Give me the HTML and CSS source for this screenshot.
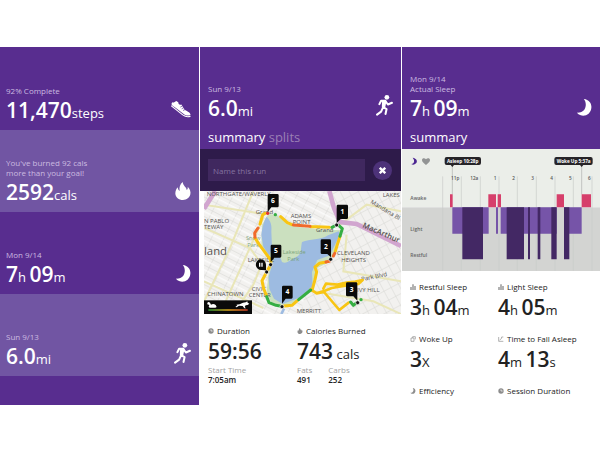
FILE: index.html
```
<!DOCTYPE html>
<html lang="en">

<head>
  <meta charset="utf-8" />
  <title>Health</title>
  <link rel="stylesheet" href="styles.css">
</head>

<body>
  <!-- shared icons -->
  <svg class="defs" aria-hidden="true">
    <symbol id="runner" viewBox="0 0 50 62">
      <circle cx="32" cy="7" r="7" />
      <path d="M10 27 L15 17 L27 17 L21 36 L31 42 L28 56 M27 17 L35 28 L47 23 M20 38 L15 49 L3 58" fill="none" stroke="currentColor" stroke-width="6" stroke-linejoin="round" stroke-linecap="round" />
      <path d="M18 15 L31 17 L27 37 L17 36z" />
    </symbol>
    <symbol id="moon" viewBox="0 0 44 50">
      <path d="M20 0 C36 2 44 14 42 27 C40 43 26 52 11 48 C6 47 2 44 0 40 C13 41 23 34 25 23 C27 14 25 6 20 0z" />
    </symbol>
    <symbol id="bars" viewBox="0 0 18 18">
      <path d="M1 9h4v9H1z M7 1h4v17H7z M13 6h4v12h-4z" />
    </symbol>
    <symbol id="clock" viewBox="0 0 18 18">
      <circle cx="9" cy="9" r="8" />
      <path d="M9 4v5h5" fill="none" stroke="#fff" stroke-width="2" />
    </symbol>
    <symbol id="flame" viewBox="0 0 46 54">
      <path d="M22 0 C23 12 34 15 34 24 C37 22 38 18 37 14 C44 21 47 29 45 37 C43 47 34 54 23 54 C10 54 1 46 0 35 C0 27 3 21 7 16 C8 22 9 25 13 27 C11 16 14 7 22 0z" />
    </symbol>
  </svg>

  <main class="screens">
    <section class="screen tiles">
      <div class="tile">
        <div>
          <p class="note">92% Complete</p>
          <p class="figure">11,470<small>steps</small></p>
        </div>
        <svg class="icon shoe" viewBox="0 0 58 50">
          <path d="M3 4 C7 6 11 3 15 0 L21 4 C21 10 25 12 30 10 L39 24 C43 30 57 31 57 41 C50 44 43 43 37 38 L13 20 C7 16 2 14 1 9z" />
          <path d="M0 14 L34 41 C42 47 49 48 57 45" fill="none" stroke="#fff" stroke-width="3" />
          <path d="M27 18l7-4M31 23l7-4M35 28l6-3" stroke="#582d8f" stroke-width="2" />
        </svg>
      </div>
      <div class="tile light">
        <div>
          <p class="note">You've burned 92 cals<br>more than your goal!</p>
          <p class="figure">2592<small>cals</small></p>
        </div>
        <svg class="icon flame"><use href="#flame" /></svg>
      </div>
      <div class="tile">
        <div>
          <p class="note">Mon 9/14</p>
          <p class="figure">7<small>h</small> 09<small>m</small></p>
        </div>
        <svg class="icon moon"><use href="#moon" /></svg>
      </div>
      <div class="tile light">
        <div>
          <p class="note">Sun 9/13</p>
          <p class="figure">6.0<small>mi</small></p>
        </div>
        <svg class="icon runner"><use href="#runner" /></svg>
      </div>
    </section>

    <section class="screen">
      <header class="head">
        <div class="headline">
          <div>
            <p class="note">Sun 9/13</p>
            <p class="figure">6.0<small>mi</small></p>
          </div>
          <svg class="icon runner"><use href="#runner" /></svg>
        </div>
        <nav class="tabs"><a href="#summary">summary</a> <a href="#splits" class="off">splits</a></nav>
      </header>
      <form class="rename">
        <input type="text" placeholder="Name this run" aria-label="Name this run">
        <button type="button" aria-label="Cancel">
          <svg viewBox="0 0 18 18"><path d="M2 2l14 14M16 2L2 16" stroke="#fff" stroke-width="6" /></svg>
        </button>
      </form>
      <svg class="map" viewBox="12 19 591 369">
        <defs>
          <pattern id="streets" width="34" height="26" patternUnits="userSpaceOnUse" patternTransform="rotate(27)">
            <path d="M0 1H34M1 0V26" stroke="#dadad6" stroke-width="2" />
            <path d="M0 14H34" stroke="#fff" stroke-width="3" />
          </pattern>
          <pattern id="streets2" width="24" height="30" patternUnits="userSpaceOnUse" patternTransform="rotate(-28)">
            <path d="M0 1H24M1 0V30" stroke="#d8d8d4" stroke-width="2" />
          </pattern>
          <linearGradient id="pace">
            <stop offset="0" stop-color="#2fae3c" />
            <stop offset=".5" stop-color="#f5b81c" />
            <stop offset="1" stop-color="#e8442c" />
          </linearGradient>
        </defs>
        <rect x="12" y="19" width="591" height="369" fill="#f2f1ef" />
        <rect x="12" y="19" width="591" height="369" fill="url(#streets)" />
        <path d="M395 19H603V388H300L340 240L420 150z" fill="#f2f1ef" />
        <path d="M395 19H603V388H300L340 240L420 150z" fill="url(#streets2)" />
        <!-- main roads -->
        <g fill="none" stroke="#e9e6b8" stroke-width="6">
          <path d="M12 350L90 190L160 19M60 388L190 100M12 130L150 190L200 260M12 60L190 88M100 388L160 300L185 240M12 290L190 370" />
          <path d="M420 120L500 60L603 80M440 150L430 260L603 290M340 320L520 350L603 388" />
        </g>
        <path d="M12 72L46 19M388 19L402 70L420 112L470 118L603 184" fill="none" stroke="#d1a5cf" stroke-width="14" />
        <!-- park and lake -->
        <path d="M205 88L230 90L262 118L300 128L385 136L424 136L418 172L392 230L352 250L336 308L296 350L246 368L214 356L200 320L206 260L212 226L184 180L186 120z" fill="#cbe0bf" />
        <path d="M200 96C212 108 216 122 214 140L216 190L208 214L190 186L184 150C188 124 192 108 200 96z" fill="#9dbbe1" />
        <path d="M220 226C232 206 240 212 246 232C262 240 272 222 290 216C306 210 302 186 306 172C330 162 360 168 384 152L416 140L420 150L400 190L390 212L352 226L336 262L338 306L296 340L248 358L222 342L208 312L206 276z" fill="#9dbbe1" />
        <path d="M244 388L252 372" fill="none" stroke="#9dbbe1" stroke-width="8" />
        <g class="places">
          <text x="20" y="33">NORTHGATE/WAVERLY</text>
          <text x="12" y="114">N PABLO</text>
          <text x="12" y="133">TEWAY</text>
          <text x="272" y="99">ADAMS</text>
          <text x="278" y="117">POINT</text>
          <text x="143" y="233">LAKESIDE</text>
          <text x="155" y="319">CIVIC</text>
          <text x="146" y="338">CENTER</text>
          <text x="22" y="334">CHINATOWN</text>
          <text x="411" y="211">CLEVELAND</text>
          <text x="424" y="231">HEIGHTS</text>
          <text x="471" y="322">IVY HILL</text>
          <text x="548" y="38">LAKES</text>
          <text x="290" y="384">MERRITT</text>
        </g>
        <g class="parks">
          <text x="138" y="165">Snow</text>
          <text x="142" y="187">Park</text>
          <text x="248" y="209">Lakeside</text>
          <text x="262" y="229">Park</text>
        </g>
        <g class="roads">
          <text x="167" y="87">Grand</text>
          <text x="348" y="142">Grand</text>
          <text x="485" y="290" transform="rotate(-12 485 290)">Park Blvd</text>
          <text x="510" y="55" transform="rotate(31 510 55)">Mandana Bl</text>
          <text class="artery" x="486" y="128" transform="rotate(23 486 128)">MacArthur</text>
        </g>
        <text class="city" x="12" y="210">land</text>
        <!-- run, coloured by pace -->
        <g fill="none" stroke-width="9" stroke-linejoin="round" stroke-linecap="round">
          <g stroke="#f8c513">
            <path d="M196 86L188 91L180 118M165 160L178 180L212 226L212 240L200 262L186 288L191 312L200 334M246 365L276 362L292 348M336 318L345 285L350 262L345 247L358 236L378 232M406 200L412 180L420 155M388 128L350 126L332 126M276 120L262 114L242 96" />
            <path d="M332 314L350 326L372 322L418 376L446 354M350 326L375 318L395 310L440 302L475 298L488 286L466 291L440 294L412 300L378 297L370 312" stroke-width="8" />
          </g>
          <path d="M174 130L164 145L165 158M378 232L388 230M400 214L404 206M330 125L280 121" stroke="#f06a2c" />
          <path d="M200 336L207 354L228 362L240 364M296 345L332 316M420 155L427 132L416 122M404 124L396 128M452 352L460 362L470 354" stroke="#35ae43" />
        </g>
        <circle cx="226" cy="90" r="5" fill="#35ae43" />
        <circle cx="203" cy="86" r="5" fill="#e0322e" />
        <circle cx="483" cy="345" r="5" fill="#35ae43" />
        <g fill="#111" stroke="#fff" stroke-width="2">
          <circle cx="410" cy="121" r="6" />
          <circle cx="392" cy="224" r="6" />
          <circle cx="473" cy="354" r="6" />
          <circle cx="246" cy="366" r="6" />
          <circle cx="212" cy="240" r="6" />
          <circle cx="200" cy="262" r="6" />
        </g>
        <g fill="#0a0a0a">
          <path d="M207 28h25q4 0 4 4v32q0 4-4 4h-18l-11 14v-50q0-4 4-4z" />
          <path d="M216 180h24q4 0 4 4v31q0 4-4 4h-17l-11 14v-49q0-4 4-4z" />
          <path d="M250 303h24q4 0 4 4v31q0 4-4 4h-17l-11 15v-50q0-4 4-4z" />
          <path d="M414 60h26q4 0 4 4v35q0 4-4 4h-18l-12 12v-51q0-4 4-4z" />
          <path d="M366 164h23q4 0 4 4v50l-11-10h-16q-4 0-4-4v-36q0-4 4-4z" />
          <path d="M442 293h26q4 0 4 4v51l-12-13h-18q-4 0-4-4v-34q0-4 4-4z" />
          <path d="M182 224a16 16 0 0 1 16 16v17l-13-1a16 16 0 1 1-3-32z" />
        </g>
        <g class="pins">
          <text x="219" y="54">6</text>
          <text x="228" y="206">5</text>
          <text x="262" y="329">4</text>
          <text x="427" y="88">1</text>
          <text x="378" y="192">2</text>
          <text x="455" y="321">3</text>
        </g>
        <path d="M179 234v12M186 234v12" stroke="#fff" stroke-width="4" />
        <!-- pace legend -->
        <rect x="12" y="347" width="144" height="41" fill="#0a0a0a" />
        <rect x="25" y="374" width="118" height="4" fill="url(#pace)" />
        <path d="M22 355q3-5 8-1l3 6q7-5 14 1l3 6-4 2H29l-3-3 2-5-6-2z" fill="#fff" />
        <path d="M109 360l10-1 10-5 8-1 5-3 1 4 5 3-5 4-6 1-3 5 4 4h-5l-5-7-11-1-7 5-4-1 6-5z" fill="#fff" />
      </svg>
      <div class="stats run">
        <div class="stat">
          <h3><svg><use href="#clock" /></svg>Duration</h3>
          <p class="figure">59:56</p>
          <dl>
            <div><dt>Start Time</dt><dd>7:05am</dd></div>
          </dl>
        </div>
        <div class="stat">
          <h3><svg><use href="#flame" /></svg>Calories Burned</h3>
          <p class="figure">743 <small>cals</small></p>
          <dl>
            <div><dt>Fats</dt><dd>491</dd></div>
            <div><dt>Carbs</dt><dd>252</dd></div>
          </dl>
        </div>
      </div>
    </section>

    <section class="screen">
      <header class="head">
        <div class="headline">
          <div>
            <p class="note">Mon 9/14<br>Actual Sleep</p>
            <p class="figure">7<small>h</small> 09<small>m</small></p>
          </div>
          <svg class="icon moon"><use href="#moon" /></svg>
        </div>
        <nav class="tabs"><a href="#sleep">summary</a></nav>
      </header>
      <svg class="chart" viewBox="6 12 594 366">
        <rect x="6" y="12" width="594" height="175" fill="#ebeee9" />
        <rect x="6" y="187" width="594" height="191" fill="#d3d4d2" />
        <path d="M128 94V377M184 94V377M241 94V377M297 94V377M352 94V377M409 94V377M465 94V377M520 94V377M576 94V377" stroke="#c9ccc9" stroke-width="2" />
        <path d="M38 38C50 40 54 49 48 55C44 60 37 60 34 57C42 56 46 48 38 38z" fill="#4b2591" />
        <path d="M78 60C70 54 66 50 66 45C66 39 74 38 78 43C82 38 90 39 90 45C90 50 86 54 78 60z" fill="#929494" />
        <path d="M157 60V148M545 60V148" stroke="#aeb1ae" stroke-width="2" />
        <g fill="#262428">
          <path d="M140 36h97q6 0 6 6v12q0 6-6 6h-75l-5 6-5-6h-12q-6 0-6-6v-12q0-6 6-6z" />
          <path d="M469 36h103q6 0 6 6v12q0 6-6 6h-22l-5 6-5-6h-71q-6 0-6-6v-12q0-6 6-6z" />
        </g>
        <g class="flags">
          <text x="188" y="54">Asleep 10:28p</text>
          <text x="521" y="54">Woke Up 5:37a</text>
        </g>
        <g class="hours">
          <text x="178" y="104">11p</text>
          <text x="235" y="104">12a</text>
          <text x="289" y="104">1</text>
          <text x="345" y="104">2</text>
          <text x="402" y="104">3</text>
          <text x="459" y="104">4</text>
          <text x="515" y="104">5</text>
          <text x="572" y="104">6</text>
        </g>
        <g class="levels">
          <text x="31" y="166">Awake</text>
          <text x="31" y="257">Light</text>
          <text x="31" y="335">Restful</text>
        </g>
        <path d="M150 148h8v39h-8zM265 148h23v39h-23zM293 148h10v39h-10zM470 148h22v39h-22zM545 148h28v39h-28z" fill="#d63f6b" />
        <path d="M157 187h109v79H157zM288 187h6v79h-6zM302 187h168v79H302zM492 187h53v79h-53z" fill="#7654a8" />
        <path d="M187 187h62v156h-62zM320 187h52v156h-52zM384 187h6v156h-6zM413 187h8v156h-8zM454 187h16v156h-16zM492 187h16v156h-16z" fill="#432864" />
      </svg>
      <div class="stats sleep">
        <div class="stat">
          <h3><svg><use href="#bars" /></svg>Restful Sleep</h3>
          <p class="figure">3<small>h</small> 04<small>m</small></p>
        </div>
        <div class="stat">
          <h3><svg><use href="#bars" /></svg>Light Sleep</h3>
          <p class="figure">4<small>h</small> 05<small>m</small></p>
        </div>
        <div class="stat">
          <h3><svg viewBox="0 0 18 18"><path d="M3 6h9v10H3zM8 6V2h8v8" fill="none" stroke="currentColor" stroke-width="2" /></svg>Woke Up</h3>
          <p class="figure">3<small>X</small></p>
        </div>
        <div class="stat">
          <h3><svg viewBox="0 0 18 18"><path d="M2 3v13h14M5 12l5-4 1-5h5" fill="none" stroke="currentColor" stroke-width="2" /></svg>Time to Fall Asleep</h3>
          <p class="figure">4<small>m</small> 13<small>s</small></p>
        </div>
        <div class="stat">
          <h3><svg><use href="#moon" /></svg>Efficiency</h3>
        </div>
        <div class="stat">
          <h3><svg><use href="#clock" /></svg>Session Duration</h3>
        </div>
      </div>
    </section>
  </main>
</body>

</html>
```
FILE: styles.css
```
* {
  box-sizing: border-box;
}

body {
  margin: 0;
  background: #fff;
  font-family: "Open Sans", "Noto Sans", sans-serif;
  font-size: 8px;
  line-height: 10px;
  color: #222;
}

p,
h3,
dl,
dd {
  margin: 0;
}

.defs {
  position: absolute;
  width: 0;
  height: 0;
}

.screens {
  display: grid;
  grid-template-columns: 199fr 201fr 198fr;
  gap: 1px;
  min-height: 100vh;
  padding: 47px 0 45px;
}

.tiles {
  background: #582d8f;
}

.tile,
.headline {
  display: flex;
  justify-content: space-between;
  align-items: flex-end;
  color: #fff;
}

.tile {
  height: 82px;
  padding: 0 8px 8px 6px;
}

.tile:first-child {
  height: 83px;
}

.light {
  background: #7155a3;
}

.note {
  margin-bottom: 2px;
  color: #cbbbe0;
}

.figure {
  font-size: 21px;
  line-height: 24px;
  font-weight: 600;
  white-space: nowrap;
  word-spacing: -2px;
}

.figure small {
  font-size: 13px;
  line-height: 1;
  font-weight: 400;
}

.icon {
  flex: none;
  fill: currentColor;
  margin-bottom: 4px;
}

.shoe {
  width: 20px;
  height: 17px;
}

.flame {
  width: 16px;
  height: 18px;
}

.moon {
  width: 15px;
  height: 17px;
}

.runner {
  width: 17px;
  height: 21px;
}

/* detail screens */
.head {
  display: flex;
  flex-direction: column;
  justify-content: flex-end;
  gap: 9px;
  height: 102px;
  padding: 0 8px 4px;
  background: #582d8f;
}

.tabs {
  font-size: 13px;
  line-height: 16px;
}

.tabs a {
  color: #fff;
  text-decoration: none;
}

.tabs .off {
  color: #9a7fb5;
}

.rename {
  display: flex;
  align-items: center;
  gap: 8px;
  height: 42px;
  padding: 0 9px 0 8px;
  background: #2e1b4a;
}

.rename input {
  flex: 1;
  min-width: 0;
  height: 22px;
  padding: 0 5px;
  border: 0;
  background: #40285f;
  color: #fff;
  font: inherit;
}

.rename input::placeholder {
  color: #8573a0;
  opacity: 1;
}

.rename button {
  display: flex;
  align-items: center;
  justify-content: center;
  width: 19px;
  height: 19px;
  padding: 0;
  border: 0;
  border-radius: 50%;
  background: #4d3279;
}

.rename button svg {
  width: 7px;
  height: 7px;
}

.map {
  display: block;
  width: calc(100% - 4px);
  margin-left: 4px;
}

.map text {
  fill: #55534f;
}

.places {
  font-size: 18px;
}

.map .parks text {
  font-size: 17px;
  fill: #7ba37a;
}

.roads {
  font-size: 18px;
}

.map .artery {
  font-size: 23px;
  font-weight: 600;
}

.map .city {
  font-size: 34px;
}

.map .pins text {
  font-size: 20px;
  font-weight: 700;
  fill: #fff;
  text-anchor: middle;
}

.chart {
  display: block;
  width: 100%;
}

.flags {
  font-size: 14px;
  font-weight: 700;
  fill: #fff;
  text-anchor: middle;
}

.hours {
  font-size: 14px;
  font-weight: 600;
  fill: #555;
  text-anchor: end;
}

.levels {
  font-size: 15px;
  font-weight: 600;
  fill: #666;
}

.stats {
  display: grid;
  grid-template-columns: 89fr 104fr;
  padding: 0 0 0 8px;
}

.run {
  padding-top: 12px;
}

.run .figure {
  margin-bottom: 2px;
}

.sleep {
  grid-template-columns: 88fr 102fr;
  row-gap: 15px;
  padding-top: 11px;
}

.stat h3 {
  display: flex;
  align-items: center;
  gap: 3px;
  margin-bottom: 3px;
  font-size: 8px;
  font-weight: 400;
  white-space: nowrap;
}

.sleep .stat:nth-last-child(-n+2) h3 {
  margin-bottom: 0;
}

.stat h3 svg {
  width: 6px;
  height: 6px;
  fill: currentColor;
  color: #8c8c8c;
}

.stat dl {
  display: flex;
  gap: 16px;
}

.stat dt {
  color: #a3a3a3;
}

.stat dd {
  font-weight: 600;
}
```
